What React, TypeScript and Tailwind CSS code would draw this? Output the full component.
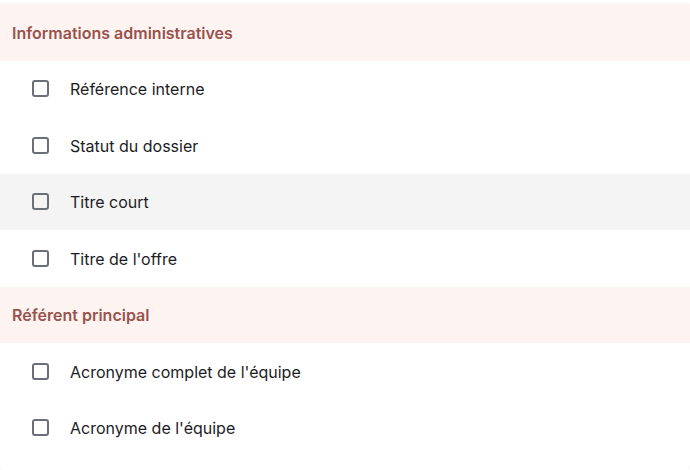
const sections = [
  {
    title: 'Informations administratives',
    items: ['Référence interne', 'Statut du dossier', 'Titre court', "Titre de l'offre"],
  },
  {
    title: 'Référent principal',
    items: ["Acronyme complet de l'équipe", "Acronyme de l'équipe"],
  },
];

function Row({ label, hovered }: { label: string; hovered?: boolean }) {
  return (
    <label
      className={`flex h-[56.5px] items-center gap-[21px] pl-8 cursor-pointer ${hovered ? 'bg-[#f4f4f4]' : 'bg-white'}`}
    >
      <span className="h-[17px] w-[17px] shrink-0 rounded-[3px] border-2 border-[#6b6f78]" />
      <span className="pt-px text-[16px] text-[#1c1c24]">{label}</span>
    </label>
  );
}

export default function App() {
  return (
    <div className="h-[470px] w-[690px] overflow-hidden bg-white pt-1 font-['Inter',sans-serif]">
      <div className="h-[468px] rounded-b-lg bg-white shadow-[0_0_3px_rgba(0,0,0,0.08)] overflow-hidden">
        {sections.map((s) => (
          <div key={s.title}>
            <div className="flex h-[56.5px] items-center bg-[#fdf4f2] px-3 pt-px text-[16px] font-semibold text-[#9a524c]">
              {s.title}
            </div>
            {s.items.map((it) => (
              <Row key={it} label={it} hovered={it === 'Titre court'} />
            ))}
          </div>
        ))}
      </div>
    </div>
  );
}
